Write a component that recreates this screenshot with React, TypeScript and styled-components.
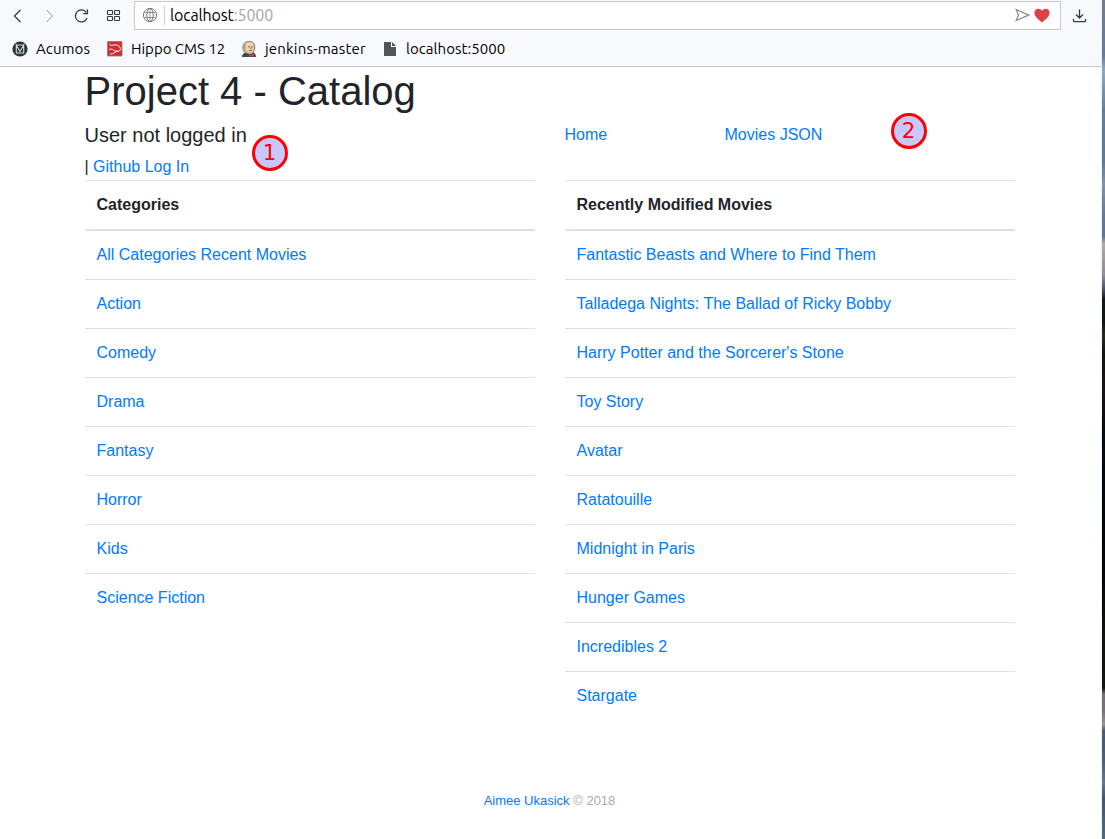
import React from "react";
import styled, { createGlobalStyle } from "styled-components";

const GlobalStyle = createGlobalStyle`
  *, *::before, *::after { box-sizing: border-box; }
  body {
    margin: 0;
    background: #fff;
    color: #212529;
    font: 16px/1.5 "Liberation Sans", Arial, sans-serif;
    overflow: hidden;
  }
`;

const Screen = styled.div`
  display: flex;
  width: 1105px;
  height: 839px;
`;

const Browser = styled.div`
  flex: 1;
  display: flex;
  flex-direction: column;
  min-width: 0;
  border-right: 1px solid #eef3fa;
`;

const DesktopEdge = styled.div`
  width: 3px;
  background: linear-gradient(
    #737f90 0, #637a98 55px, #8eacc4 70px, #637d9c 110px, #5f7896 160px,
    #8193aa 185px, #65799a 215px, #5e7593 236px, #b2aaa5 244px, #8f8d9a 275px,
    #46536f 289px, #12191c 299px, #10150f 322px, #272a1b 335px, #10140f 355px,
    #1c1116 390px, #040a10 430px, #020409 570px, #11140c 640px, #11130f 688px,
    #737078 694px, #77747c 712px, #9a9297 724px, #485a74 731px, #4b6078 760px,
    #63788c 783px, #43566f 798px, #526983 839px
  );
`;

const Chrome = styled.header`
  height: 67px;
  background: #f7f9fc;
  border-bottom: 1px solid #c6c8cb;
  font-family: Ubuntu, "Noto Sans", sans-serif;
  color: #000;
`;

const Toolbar = styled.div`
  display: flex;
  height: 31px;
  padding-left: 2px;
`;

const NavButton = styled.span<{ $color?: string }>`
  display: flex;
  flex: none;
  align-items: center;
  justify-content: center;
  width: 32px;
  height: 31px;
  color: ${(p) => p.$color ?? "#36393f"};
`;

const AddressBar = styled.div`
  display: flex;
  flex: none;
  align-items: center;
  width: 927px;
  height: 29px;
  margin: 1px 3px 0 4px;
  padding: 0 10px 0 7px;
  background: #fff;
  border: 1px solid #c6c8cb;
  svg { margin-bottom: 1px; }
`;

const Divider = styled.i`
  width: 1px;
  height: 19px;
  margin: 0 5px 0 6px;
  background: #c9cbce;
`;

const Address = styled.span`
  flex: 1;
  font-size: 16px;
  line-height: 25px;
  letter-spacing: -0.15px;
  span { color: #a4a4a4; }
`;

const Bookmarks = styled.div`
  display: flex;
  align-items: center;
  height: 35px;
  padding-left: 12px;
`;

const Bookmark = styled.div<{ $width: number; $spacing: number }>`
  display: flex;
  align-items: center;
  gap: 8px;
  width: ${(p) => p.$width}px;
  white-space: nowrap;
  font-size: 15px;
  line-height: 20px;
  letter-spacing: ${(p) => p.$spacing}px;
  svg { flex: none; }
`;

const Container = styled.main`
  flex: 1;
  display: flex;
  flex-direction: column;
  width: 960px;
  margin-left: 69.5px;
  padding: 0 15px;
`;

const Title = styled.h1`
  margin: 0 0 8px;
  font-size: 40px;
  font-weight: 400;
  line-height: 48px;
`;

const Columns = styled.div`
  display: grid;
  grid-template-columns: 450px 450px;
  column-gap: 30px;
`;

const Status = styled.div`
  position: relative;
  height: 57px;
`;

const StatusTitle = styled.h5`
  margin: 0 0 8px;
  font-size: 20px;
  font-weight: 400;
  line-height: 24px;
`;

const Menu = styled.nav`
  position: relative;
  display: grid;
  grid-template-columns: 160px 160px;
  align-items: start;
`;

const Link = styled.a`
  color: #007bff;
`;

const Marker = styled.b<{ $left: number; $top: number }>`
  position: absolute;
  left: ${(p) => p.$left}px;
  top: ${(p) => p.$top}px;
  width: 36px;
  height: 36px;
  border: 3px solid #f00;
  border-radius: 50%;
  background: #c8c8ff;
  color: #f00;
  font: 21.5px/29px "DejaVu Sans", sans-serif;
  text-align: center;
  text-indent: -1px;
`;

const List = styled.div``;

const ListHeader = styled.div`
  height: 51px;
  padding: 12px;
  border-top: 1px solid #dee2e6;
  border-bottom: 2px solid #dee2e6;
  font-weight: 700;
`;

const Row = styled.div`
  height: 49px;
  padding: 12px;
  & + & { border-top: 1px solid #dee2e6; }
  &:nth-child(2) { height: 48px; }
`;

const Footer = styled.footer`
  margin-top: auto;
  margin-bottom: 28px;
  text-align: center;
  font-size: 13px;
  line-height: 20px;
  color: #aaa;
`;

const categories = ["All Categories Recent Movies", "Action", "Comedy", "Drama", "Fantasy", "Horror", "Kids", "Science Fiction"];
const movies = [
  "Fantastic Beasts and Where to Find Them",
  "Talladega Nights: The Ballad of Ricky Bobby",
  "Harry Potter and the Sorcerer's Stone",
  "Toy Story",
  "Avatar",
  "Ratatouille",
  "Midnight in Paris",
  "Hunger Games",
  "Incredibles 2",
  "Stargate",
];

const stroke = { fill: "none", stroke: "currentColor", strokeWidth: 1.3 };

const BackIcon = () => (
  <svg width="16" height="16" viewBox="0 0 16 16" {...stroke}><path d="M10.5 2 4.500 8l6 6" /></svg>
);
const ForwardIcon = () => (
  <svg width="16" height="16" viewBox="0 0 16 16" {...stroke}><path d="m4.500 2 6 6-6 6" /></svg>
);
const ReloadIcon = () => (
  <svg width="16" height="16" viewBox="0 0 16 16" {...stroke}>
    <path d="M13 10A6 6 0 1 1 12.200 4.300" /><path d="M13.400 1.500v4.200H9.200" />
  </svg>
);
const GridIcon = () => (
  <svg width="16" height="16" viewBox="0 0 16 16" {...stroke} strokeWidth="1.1">
    {[[1.5, 2.5], [8.5, 2.5], [1.5, 8.5], [8.5, 8.5]].map(([x, y]) => (
      <rect key={`${x}-${y}`} x={x} y={y} width="5" height="4" rx=".8" />
    ))}
  </svg>
);
const GlobeIcon = () => (
  <svg width="16" height="16" viewBox="0 0 16 16" fill="none" stroke="#77797c">
    <circle cx="8" cy="8" r="6.600" /><ellipse cx="8" cy="8" rx="3.200" ry="6.600" />
    <path d="M8 1.400v13.200M2.500 5.500h11M2.500 10.500h11" strokeWidth=".8" />
  </svg>
);
const SendIcon = () => (
  <svg width="15" height="14" viewBox="0 0 15 14" fill="none" stroke="#88898b" strokeWidth="1.200">
    <path d="m1.200 1.500 12.400 5.600L1.200 12.500l2.200-5.400z" />
  </svg>
);
const HeartSvg = styled.svg`
  margin-left: 4px;
`;
const HeartIcon = () => (
  <HeartSvg width="16" height="15" viewBox="0 0 16 15">
    <path fill="#dc4245" d="M8 14.500C4 11.300.4 8.500.4 4.800.4 2.400 2.100.7 4.300.7 5.900.7 7.200 1.500 8 2.800 8.800 1.500 10.100.7 11.700.7c2.200 0 3.900 1.700 3.900 4.100 0 3.700-3.600 6.500-7.600 9.700z" />
  </HeartSvg>
);
const DownloadIcon = () => (
  <svg width="16" height="16" viewBox="0 0 16 16" {...stroke}>
    <path d="M7.500 1.500V10M4 6.500 7.500 10 11 6.500M1.500 11v1.700q0 1 1 1h10q1 0 1-1V11" />
  </svg>
);
const AcumosIcon = () => (
  <svg width="16" height="16" viewBox="0 0 16 16">
    <circle cx="8" cy="8" r="7.600" fill="#27323a" />
    <path d="M4.300 12V4l3.700 6.500L11.700 4v8zM4.300 4h7.400" fill="none" stroke="#d6dbde" strokeWidth="1.100" />
  </svg>
);
const HippoIcon = () => (
  <svg width="16" height="16" viewBox="0 0 16 16">
    <path fill="#d22c2e" stroke="#a9706e" strokeWidth=".8" d="M.5.5h14.500v14.500H.5z" />
    <path d="M2.500 2.800C3 4.400 4 4.600 5.300 4.300c2.200-.7 4.700-.8 6.500.6 2 1.500 2 3.900.5 5.300M2 8.600c2.200-1 3.300-.4 4.500.6 1.200 1 2.500 1 4 .4M11.800 10.300l-2.600.2-2.500 1.700-3.500 1" fill="none" stroke="#fff" strokeWidth="1" />
  </svg>
);
const JenkinsIcon = () => (
  <svg width="16" height="16" viewBox="0 0 16 16">
    <path fill="#304d59" d="M1 16c0-2 1.200-4 3.500-4.500l7.500-.3c2 .8 3 2.600 3 4.800z" />
    <path fill="#d2b99b" stroke="#625950" strokeWidth=".7" d="M3.400 11C1 8.500 1.500 3.500 4 1.500 7-.3 11.500-.2 13.200 3c1.200 3 .3 7.500-1.700 9.500-2.500 1.200-5.800.5-8.100-1.500z" />
    <path fill="#a7a39b" d="M2.300 4.500 4.500 3l-.5 5-1.500.8z" />
    <path fill="#eed0ac" d="M5 3c2-2.500 6.500-2 7.500.7.8 3-.2 6.200-1.700 7.700-2.400.6-4.700-.8-5.800-2.900z" />
    <path d="M7 5.700h2m1.500 0h1.700M10 6v2.300M8 9.600h3" stroke="#655348" strokeWidth=".8" />
    <path fill="#d43b3c" d="m8 13 2.500.7L13 12.500V16l-2.500-1L8 16z" />
  </svg>
);
const FileIcon = () => (
  <svg width="14" height="16" viewBox="0 0 14 16">
    <path fill="#535456" d="M0 1h7v5h5v9H0z" /><path fill="#535456" d="M8 1v4h4z" />
  </svg>
);

function LinkList({ heading, items }: { heading: string; items: string[] }) {
  return (
    <List>
      <ListHeader>{heading}</ListHeader>
      {items.map((item) => <Row key={item}><Link>{item}</Link></Row>)}
    </List>
  );
}

export default function App() {
  return (
    <Screen>
      <GlobalStyle />
      <Browser>
        <Chrome>
          <Toolbar>
            <NavButton><BackIcon /></NavButton>
            <NavButton $color="#bfc1c4"><ForwardIcon /></NavButton>
            <NavButton><ReloadIcon /></NavButton>
            <NavButton><GridIcon /></NavButton>
            <AddressBar>
              <GlobeIcon />
              <Divider />
              <Address>localhost<span>:5000</span></Address>
              <SendIcon />
              <HeartIcon />
            </AddressBar>
            <NavButton><DownloadIcon /></NavButton>
          </Toolbar>
          <Bookmarks>
            <Bookmark $width={95} $spacing={0.1}><AcumosIcon />Acumos</Bookmark>
            <Bookmark $width={134} $spacing={0}><HippoIcon />Hippo CMS 12</Bookmark>
            <Bookmark $width={143} $spacing={0.2}><JenkinsIcon />jenkins-master</Bookmark>
            <Bookmark $width={130} $spacing={0.05}><FileIcon />localhost:5000</Bookmark>
          </Bookmarks>
        </Chrome>
        <Container>
          <Title>Project 4 - Catalog</Title>
          <Columns>
            <Status>
              <StatusTitle>User not logged in</StatusTitle>
              | <Link>Github Log In</Link>
              <Marker $left={167.5} $top={12}>1</Marker>
            </Status>
            <Menu>
              <Link>Home</Link>
              <Link>Movies JSON</Link>
              <Marker $left={326.5} $top={-10}>2</Marker>
            </Menu>
            <LinkList heading="Categories" items={categories} />
            <LinkList heading="Recently Modified Movies" items={movies} />
          </Columns>
          <Footer><Link>Aimee Ukasick</Link> © 2018</Footer>
        </Container>
      </Browser>
      <DesktopEdge />
    </Screen>
  );
}
